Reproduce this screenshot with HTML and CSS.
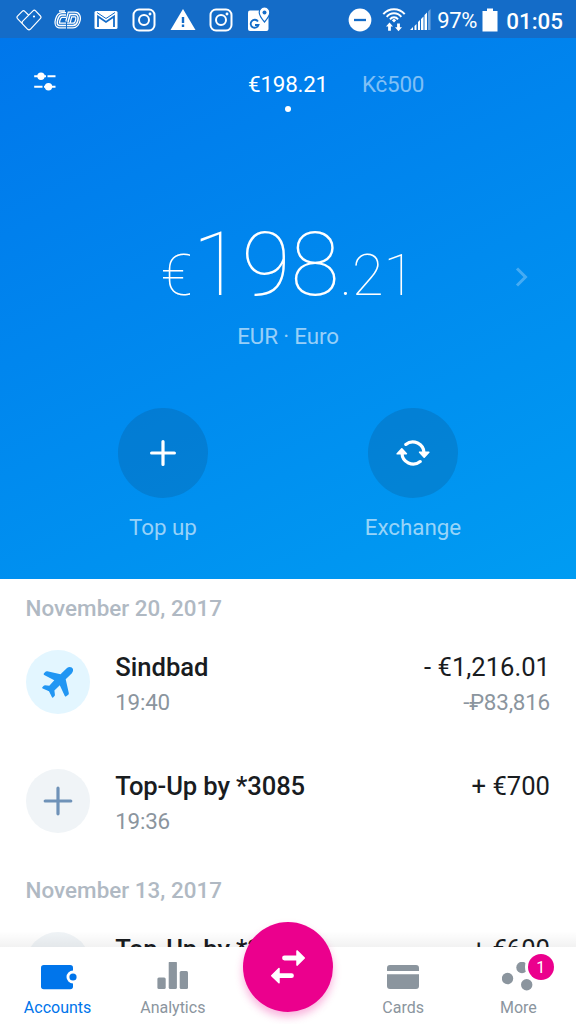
FILE: index.html
```html
<!DOCTYPE html>
<html lang="en">
<head>
<meta charset="utf-8">
<title>Accounts</title>
<link rel="stylesheet" href="styles.css">
</head>
<body>
<div class="app">
  <section class="hero">
    <div class="status">
      <div class="status-icons">
        <svg width="26" height="24" viewBox="0 0 26 24" fill="none" stroke="#fff" stroke-width="1.2" stroke-linejoin="round"><path d="M17 2.800Q18.300 1.500 19.600 2.800L24.500 8Q25.500 9.300 24.500 10.300L14.300 21.300Q13 22.400 11.700 21.300L1.500 10.600Q.4 9.300 1.500 8.200L6.200 3.300Q7.500 2 8.800 3.300L12.500 7M17 2.800L6.500 13.300Q5.800 14.200 6.500 15.500"/><circle cx="18" cy="8.500" r=".5"/></svg>
        <svg width="28" height="24" viewBox="0 0 28 24" fill="none"><g stroke="#fff" stroke-width="5.800"><path d="M13 7H9C5 7 2.500 16.500 6 17.500H13"/><path d="M14 17.500H20C25 17.500 27.500 6.500 22 6.500H17L15 14"/></g><g stroke="#146cc8" stroke-width="3.300"><path d="M13 7H9C5 7 2.500 16.500 6 17.500H13"/><path d="M14 17.500H20C25 17.500 27.500 6.500 22 6.500H17L15 14"/></g><g stroke="#fff" stroke-width="1.500"><path d="M13 7H9C5 7 2.500 16.500 6 17.500H13"/><path d="M14 17.500H20C25 17.500 27.500 6.500 22 6.500H17L15 14M6 3H12"/></g></svg>
        <svg width="24" height="24" viewBox="0 0 24 24"><rect x=".5" y="3" width="23" height="18" rx="1.500" fill="#fff"/><path d="M4 19V8.500L12 14L20 8.500V19" fill="none" stroke="#146cc8" stroke-width="1.800"/><path d="M3 4.500L12 10.500L21 4.500" fill="none" stroke="#146cc8" stroke-width="1"/></svg>
        <svg width="24" height="24" viewBox="0 0 24 24" fill="none" stroke="#fff" stroke-width="2"><rect x="1.500" y="1.500" width="21" height="21" rx="5.500"/><circle cx="12" cy="12" r="5"/><circle cx="18" cy="6" r=".7" stroke-width="1.500"/></svg>
        <svg width="26" height="24" viewBox="0 0 26 24"><path d="M13 1L25.500 22H.5Z" fill="#fff"/><path d="M13 9V15M13 16.500V19" stroke="#146cc8" stroke-width="2.400"/></svg>
        <svg width="24" height="24" viewBox="0 0 24 24" fill="none" stroke="#fff" stroke-width="2"><rect x="1.500" y="1.500" width="21" height="21" rx="5.500"/><circle cx="12" cy="12" r="5"/><circle cx="18" cy="6" r=".7" stroke-width="1.500"/></svg>
        <svg class="maps" width="24" height="26" viewBox="0 0 24 26"><rect x="1" y="4.500" width="20.500" height="20.500" rx="2" fill="#fff"/><path d="M11 15.500A4 4 0 1 0 11.500 19H8" fill="none" stroke="#146cc8" stroke-width="1.800"/><path d="M17.500 1A5.300 5.300 0 0 1 22.800 6.300C22.800 10 17.500 16 17.500 16S12.200 10 12.200 6.300A5.300 5.300 0 0 1 17.500 1Z" fill="#fff" stroke="#146cc8" stroke-width="1.200"/><circle cx="17.500" cy="6.500" r="2" fill="#146cc8"/></svg>
      </div>
      <div class="status-info">
        <svg class="dnd" width="24" height="24" viewBox="0 0 24 24"><circle cx="12" cy="12" r="11.400" fill="#fff"/><path d="M6 12H18" stroke="#146cc8" stroke-width="2.300"/></svg>
        <svg class="wifi" width="24" height="24" viewBox="0 0 24 24" fill="none" stroke="#fff" stroke-width="2"><path d="M1.300 6.200C7-.4 17-.4 22.700 6.200M4.700 8.800C8.500 4.200 15.500 4.200 19.300 8.800M8 11.300C10 8.700 14 8.700 16 11.300"/><path d="M12 10.800L14.200 12.200L12 14.500L9.800 12.200ZM7.500 14.500L11 18.500H8.900V22.800H6.100V18.500H4ZM16.500 23.300L13 19.300H15.100V15.500H17.900V19.300H20Z" fill="#fff" stroke="none"/></svg>
        <svg class="signal" width="22" height="24" viewBox="0 0 22 24" fill="#fff"><path d="M1 22L4 19V22ZM5.500 18L7.500 16V22H5.500ZM9 14L11 12V22H9ZM12 11L14.500 8.500V22H12ZM15.500 7L18 4.500V22H15.500Z"/><path opacity=".4" d="M19 3.500L21.500 1V22H19Z"/></svg>
        <span class="battery-text">97%</span>
        <svg class="battery" width="16" height="24" viewBox="0 0 16 24"><path d="M.5 3H5V.5H11V3H15.500V23.500H.5Z" fill="#fff"/></svg>
        <span class="clock">01:05</span>
      </div>
    </div>

    <div class="tabs">
      <svg class="filter" width="24" height="20" viewBox="0 0 24 20" fill="#fff" stroke="#fff" stroke-width="2"><path d="M1.200 5.300H13M14.500 5.300H22.500M1.200 15.800H9.500M11 15.800H22.500"/><circle cx="8" cy="5.300" r="2.700"/><circle cx="15.500" cy="15.800" r="2.700"/></svg>
      <span class="tab active">€198.21</span>
      <span class="tab">Kč500</span>
    </div>

    <div class="balance">
      <div class="amount"><span class="minor">€</span><span class="major">198</span><span class="minor">.21</span></div>
      <svg class="next" width="14" height="20" viewBox="0 0 14 20" fill="none" stroke="#fff" stroke-opacity=".27" stroke-width="3"><path d="M2 1.500L10.500 10L2 18.500"/></svg>
    </div>
    <div class="currency">EUR · Euro</div>

    <div class="actions">
      <div class="action">
        <div class="action-circle"><svg width="28" height="28" viewBox="0 0 28 28" stroke="#fff" stroke-width="3.200" stroke-linecap="round"><path d="M14 2.600V25.400M2.600 14H25.400"/></svg></div>
        <span>Top up</span>
      </div>
      <div class="action">
        <div class="action-circle"><svg width="34" height="28" viewBox="0 0 34 28" fill="none" stroke="#fff" stroke-width="3.200" stroke-linecap="round"><path d="M9.800 5.400A11.200 11.200 0 0 1 28 14M24.200 22.600A11.200 11.200 0 0 1 6 14"/><path d="M23.600 13.200H32.800L28.200 18.200ZM1.200 14.800H10.400L5.800 9.800Z" fill="#fff" stroke-width="1.600" stroke-linejoin="round"/></svg></div>
        <span>Exchange</span>
      </div>
    </div>
  </section>

  <main class="feed">
    <h2 class="date">November 20, 2017</h2>
    <article class="row">
      <div class="avatar travel"><svg width="34" height="34" viewBox="0 0 34 34" fill="#2196f3"><path d="M32 4.300C31.200 1.600 28 1.200 26 3L19.500 9.200L6.300 6.200Q5 6 4.200 7L2.800 8.600Q2.200 9.500 3.200 10.100L13.300 15.300L8.300 20.800L4 20.300Q3.300 20.300 2.800 20.800L1.300 22.300Q.9 23 1.700 23.400L8 26.200L11 32.300Q11.500 33 12.100 32.400L13.500 31Q14 30.500 13.900 29.800L13.400 25.500L18.800 20.200L23.800 31Q24.300 32 25.200 31.300L27.300 29.700Q28 29 27.800 28L24.700 14.300L30.900 8.200Q32.600 6.500 32 4.300Z"/></svg></div>
      <div class="details"><strong>Sindbad</strong><span>19:40</span></div>
      <div class="sum"><b>- €1,216.01</b><span>-₽83,816</span></div>
    </article>
    <article class="row">
      <div class="avatar"><svg width="30" height="30" viewBox="0 0 30 30" stroke="#6f92b8" stroke-width="3.200" stroke-linecap="round"><path d="M15 2.200V27.800M2.200 15H27.800"/></svg></div>
      <div class="details"><strong class="tight">Top-Up by *3085</strong><span>19:36</span></div>
      <div class="sum"><b>+ €700</b></div>
    </article>
    <h2 class="date second">November 13, 2017</h2>
    <article class="row">
      <div class="avatar"></div>
      <div class="details"><strong class="tight">Top-Up by *3085</strong></div>
      <div class="sum"><b>+ €600</b></div>
    </article>
  </main>

  <nav class="nav">
    <div class="nav-item current">
      <svg width="38" height="30" viewBox="0 0 38 30" fill="#0075eb"><rect x="1" y="3" width="32" height="24.300" rx="2.800"/><circle cx="33" cy="15" r="6.500" fill="#fff"/><circle cx="33" cy="15" r="3.600"/></svg>
      <span>Accounts</span>
    </div>
    <div class="nav-item">
      <svg width="32" height="30" viewBox="0 0 32 30" fill="#8b959e"><rect x=".4" y="15.500" width="8.300" height="11.500" rx="1.500"/><rect x="11.700" y="-.5" width="8.200" height="27.500" rx="1.500"/><rect x="22.700" y="9" width="8.300" height="18" rx="1.500"/></svg>
      <span>Analytics</span>
    </div>
    <button class="fab" aria-label="Transfer"><svg width="36" height="34" viewBox="0 0 36 34"><path d="M14.500 8H27M9 25.700H21.500" stroke="#fff" stroke-width="4.800" stroke-linecap="round"/><path d="M27 .9L34.300 8L27 15.100ZM9 18.600L1.700 25.700L9 32.800Z" fill="#fff" stroke="#fff" stroke-width="1.500" stroke-linejoin="round"/></svg></button>
    <div class="nav-item">
      <svg width="32" height="30" viewBox="0 0 32 30" fill="#8b959e"><path d="M0 9V6Q0 3 3 3H29Q32 3 32 6V9ZM0 12.300H32V24Q32 27 29 27H3Q0 27 0 24Z"/></svg>
      <span>Cards</span>
    </div>
    <div class="nav-item">
      <svg width="32" height="30" viewBox="0 0 32 30" fill="#8b959e"><circle cx="5.500" cy="16.500" r="5.700"/><circle cx="20" cy="5.500" r="5.700"/><circle cx="24.700" cy="22.800" r="5.700"/></svg>
      <span>More</span>
      <i class="badge">1</i>
    </div>
  </nav>
</div>
</body>
</html>
```
FILE: styles.css
```css
* { box-sizing: border-box; }
body { margin: 0; font-family: Roboto, "Liberation Sans", sans-serif; background: #fff; }
svg { display: block; flex: none; }
.app { width: 576px; height: 1024px; overflow: hidden; display: flex; flex-direction: column; font-size: 22.4px; }

.hero { flex: none; height: 579px; color: #fff; background: linear-gradient(155deg, #0075eb 0%, #009cf2 100%); display: flex; flex-direction: column; }
.status { height: 38px; flex: none; background: #146cc8; display: flex; justify-content: space-between; align-items: center; padding: 2px 13px 0 9.800px; }
.status-icons { display: grid; grid-template-columns: repeat(7, 38.400px); place-items: center; }
.maps { margin-top: -3px; }
.status-info { display: flex; align-items: center; line-height: 38px; }
.dnd { margin-right: 10px; }
.wifi { margin-right: 3px; }
.signal { margin-right: 6px; }
.battery-text { font-size: 22px; letter-spacing: -.3px; padding-top: 1px; }
.battery { margin: 0 8px 0 5px; }
.clock { font-size: 22.4px; font-weight: 500; padding-top: 1px; }

.tabs { display: grid; grid-template-columns: 215px 79px 1fr; align-items: center; height: 90px; padding: 1px 0 0 33px; letter-spacing: -.2px; }
.tab { line-height: 26px; padding-left: 35px; color: rgba(255,255,255,.5); white-space: nowrap; }
.tab.active { padding-left: 0; color: #fff; position: relative; }
.tab.active::after { content: ""; position: absolute; left: 37px; top: 35px; width: 6px; height: 6px; border-radius: 50%; background: #fff; }
.filter { margin-top: -5px; }

.balance { display: grid; grid-template-columns: 48px 1fr 48px; margin-top: 82px; height: 110px; align-items: center; }
.amount { grid-column: 2; text-align: center; font-weight: 100; line-height: 110px; white-space: nowrap; }
.major { font-size: 89.6px; }
.minor { font-size: 57.6px; }
.next { justify-self: start; margin-top: 2px; margin-left: -13px; }
.currency { text-align: center; line-height: 26px; margin-top: 3px; color: rgba(255,255,255,.6); letter-spacing: -.15px; }

.actions { display: flex; justify-content: center; gap: 110px; margin-top: 59px; }
.action { width: 140px; display: flex; flex-direction: column; align-items: center; gap: 16px; line-height: 26px; color: rgba(255,255,255,.6); letter-spacing: -.05px; }
.action-circle { width: 90px; height: 90px; border-radius: 50%; background: rgba(13,80,130,.25); display: grid; place-items: center; }

.feed { flex: 1; min-height: 0; overflow: hidden; position: relative; padding: 16px 26px 0 25.600px; }
.feed::after { content: ""; position: absolute; left: 0; right: 0; bottom: 0; height: 16px; background: linear-gradient(rgba(0,0,0,0), rgba(0,0,0,.05)); }
.date { margin: 0 0 29px; font-size: 22.4px; line-height: 26px; font-weight: 500; color: #b0b9c3; letter-spacing: .03px; }
.row { height: 64px; display: flex; margin-bottom: 55px; }
.date.second { margin-top: -11px; }
.avatar { width: 64px; height: 64px; flex: none; border-radius: 50%; background: #f0f4f7; display: grid; place-items: center; }
.avatar.travel { background: #e3f6ff; }
.details, .sum { display: flex; flex-direction: column; line-height: 30px; font-size: 25.6px; color: #191c1f; padding-top: 1.500px; }
.details { margin-left: 25.600px; flex: 1; }
.details strong { font-weight: 500; }
.details .tight { letter-spacing: -.12px; }
.details span, .sum span { font-size: 22.4px; line-height: 40px; color: #8b959e; letter-spacing: -.2px; }
.sum { text-align: right; }
.sum b { font-weight: 400; }

.nav { flex: none; height: 77px; display: grid; grid-template-columns: repeat(5, 1fr); background: #fff; color: #8b959e; font-size: 16px; }
.nav-item { position: relative; display: flex; flex-direction: column; align-items: center; padding-top: 15px; gap: 6px; line-height: 20px; }
.current { color: #0075eb; }
.current svg { margin-left: 3px; }
.fab { position: relative; z-index: 1; justify-self: center; width: 90px; height: 90px; margin: -25px 0 0; padding: 0; border: 0; border-radius: 50%; background: #eb008d; box-shadow: 0 5px 9px rgba(235,0,141,.3); display: grid; place-items: center; }
.badge { position: absolute; left: 67px; top: 7px; width: 26px; height: 26px; border-radius: 50%; background: #eb008d; color: #fff; font-style: normal; text-align: center; line-height: 27px; font-size: 16px; box-shadow: 0 0 0 3px #fff; }
```
